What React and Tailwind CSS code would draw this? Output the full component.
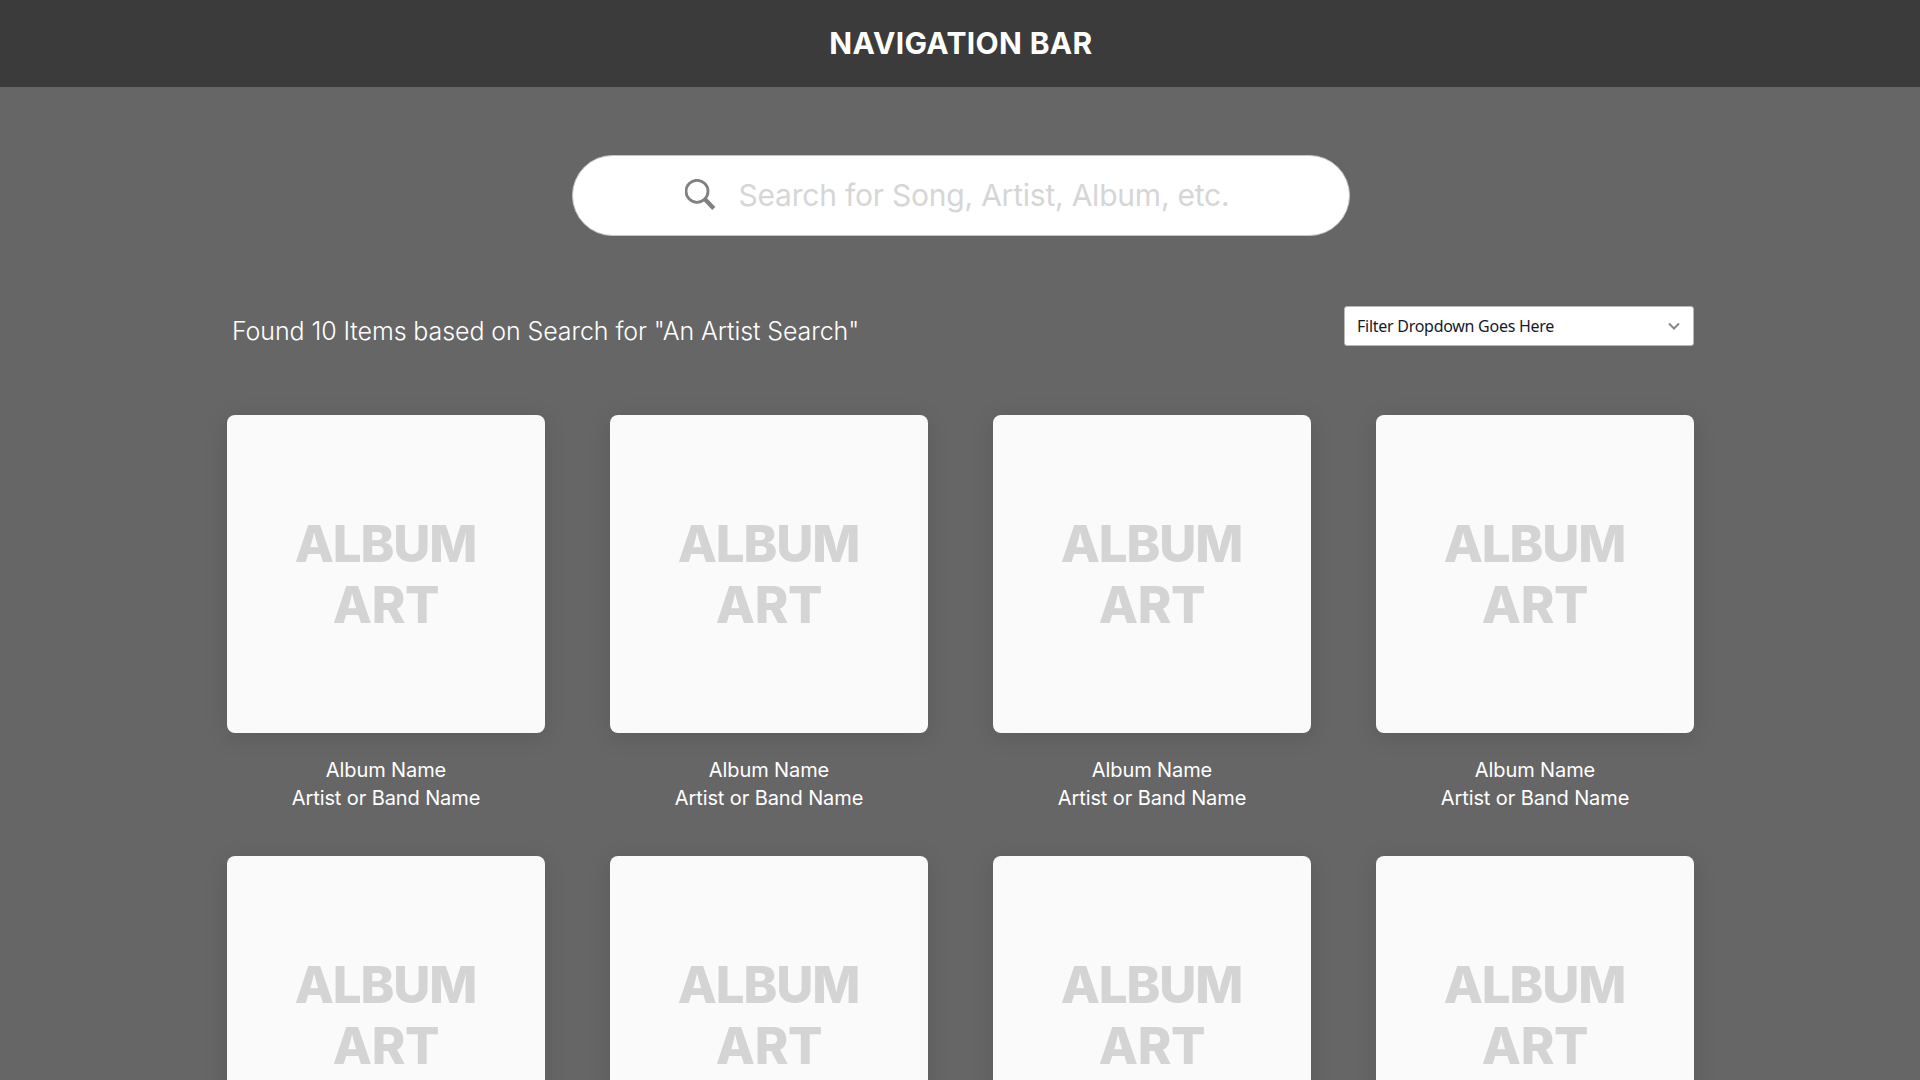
function AlbumCard() {
  return (
    <article className="flex h-[441px] flex-col items-center text-white">
      <div className="flex h-[318px] w-[318px] flex-col items-center justify-center rounded-lg bg-[#fafafa] text-[51px] leading-[61px] font-extrabold text-[#d4d4d4] shadow-[0_4px_24px_rgba(0,0,0,0.11)]">
        <span className="pr-px tracking-[-1.1px]">ALBUM</span>
        <span className="tracking-[-0.4px]">ART</span>
      </div>
      <p className="mt-[23px] text-center text-[20px] leading-[28px] tracking-[-0.1px]">Album Name<br />Artist or Band Name</p>
    </article>
  );
}

export default function App() {
  return (
    <div className="h-[1080px] overflow-hidden bg-[#666666] font-['Inter',sans-serif]">
      <header className="flex h-[87px] items-center justify-center bg-[#3b3b3b] pl-[2px] text-[30px] font-bold tracking-[0.34px] text-white">
        <span>NAVIGATION BAR</span>
      </header>
      <main className="ml-[227px] w-[1467px]">
        <div className="mx-auto mt-[68px] flex h-[81px] w-[778px] items-center rounded-full border border-[#c4c4c4] bg-white pl-[112px]">
          <svg className="mb-px h-[32px] w-[32px]" viewBox="0 0 32 32" fill="none" stroke="#808080">
            <circle cx="12" cy="12.3" r="11" strokeWidth="2.8" />
            <path d="M19.5 19.8L28.8 29.6" strokeWidth="4.4" />
          </svg>
          <span className="ml-[22px] text-[30px] tracking-[-0.22px] text-[#d6d6d6]">Search for Song, Artist, Album, etc.</span>
        </div>
        <div className="mt-[70px] flex h-[109px] justify-between">
          <p className="mt-[8px] ml-[5px] text-[25px] leading-[34px] font-light tracking-[-0.1px] text-white">Found 10 Items based on Search for "An Artist Search"</p>
          <div className="flex h-[40px] w-[350px] items-center justify-between rounded-[3px] border border-[#b8b8b8] bg-white pr-[11px] pl-3 font-['Noto_Sans',sans-serif] text-[16px] tracking-[-0.27px] text-[#15192b]">
            <span>Filter Dropdown Goes Here</span>
            <svg className="h-4 w-4" viewBox="0 0 16 16" fill="none" stroke="#85888e" strokeWidth="2"><path d="M3 5.5L8 10.5L13 5.5" /></svg>
          </div>
        </div>
        <section className="grid grid-cols-[repeat(4,318px)] justify-between">
          {Array.from({ length: 8 }, (_, i) => <AlbumCard key={i} />)}
        </section>
      </main>
    </div>
  );
}
